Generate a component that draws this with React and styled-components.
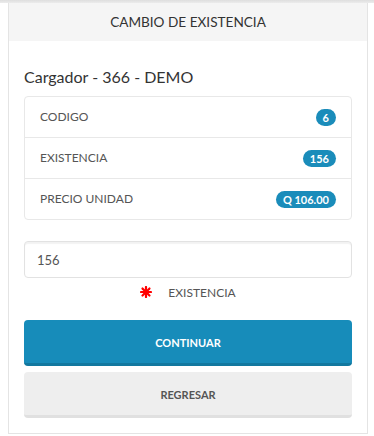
import React, { useState } from 'react'
import styled, { createGlobalStyle } from 'styled-components'

const GlobalStyle = createGlobalStyle`
  html, body {
    margin: 0;
    padding: 0;
    background: #ffffff;
    font-family: "Lato", "Liberation Sans", sans-serif;
    color: #555;
  }
  * { box-sizing: border-box; }
`

const TopShadow = styled.div`
  height: 3px;
  background: linear-gradient(#dedede, #ececec);
`

const Panel = styled.div`
  margin: 0 6px 0 8px;
  border: 1px solid #e4e4e4;
  border-top: none;
  background: #fff;
`

const PanelHeader = styled.div`
  background: #f5f5f5;
  height: 38px;
  display: flex;
  align-items: center;
  justify-content: center;
  font-size: 13.6px;
  color: #333;
`

const PanelBody = styled.div`
  padding: 24px 15px 15px;
`

const Title = styled.h3`
  margin: 0 0 7px;
  font-size: 16px;
  font-weight: 400;
  line-height: 24px;
  color: #333;
`

const ListGroup = styled.ul`
  list-style: none;
  margin: 0;
  padding: 0;
  border: 1px solid #e8e8e8;
  border-radius: 4px;
`

const ListItem = styled.li`
  display: flex;
  justify-content: space-between;
  align-items: center;
  padding: 10px 15px;
  line-height: 20px;
  font-size: 12px;
  color: #555;
  & + & {
    border-top: 1px solid #e8e8e8;
  }
`

const Badge = styled.span`
  background: #1a8cba;
  color: #fff;
  font-size: 11px;
  font-weight: 700;
  line-height: 17px;
  padding: 0 7px;
  border-radius: 10px;
`

const Input = styled.input`
  display: block;
  width: 100%;
  height: 37px;
  margin-top: 21px;
  padding: 0 12px;
  border: 1px solid #e2e2e2;
  border-radius: 4px;
  box-shadow: inset 0 2px 1px rgba(0, 0, 0, 0.05);
  font-family: inherit;
  font-size: 13px;
  color: #555;
  outline: none;
`

const FieldLabel = styled.div`
  display: flex;
  justify-content: center;
  align-items: center;
  gap: 16px;
  height: 28px;
  font-size: 12px;
  color: #555;
`

const Button = styled.button`
  display: block;
  width: 100%;
  height: 46px;
  margin-top: ${p => p.$mt}px;
  border: none;
  border-bottom: 3px solid ${p => p.$shade};
  border-radius: 4px;
  background: ${p => p.$bg};
  color: ${p => p.$fg};
  font-family: inherit;
  font-size: 11px;
  font-weight: 700;
  padding-top: 3px;
  cursor: pointer;
`

const Asterisk = () => (
  <svg width="12" height="12" viewBox="0 0 12 12">
    <g stroke="#ff0000" strokeWidth="2.2" strokeLinecap="round">
      <line x1="6" y1="1" x2="6" y2="11" />
      <line x1="1" y1="6" x2="11" y2="6" />
      <line x1="2.5" y1="2.5" x2="9.5" y2="9.5" />
      <line x1="9.5" y1="2.5" x2="2.5" y2="9.5" />
    </g>
    <circle cx="6" cy="6" r="2.6" fill="#ff0000" />
  </svg>
)

const rows = [
  { label: 'CODIGO', value: '6' },
  { label: 'EXISTENCIA', value: '156' },
  { label: 'PRECIO UNIDAD', value: 'Q 106.00' },
]

export default function App() {
  const [stock, setStock] = useState('156')
  return (
    <>
      <GlobalStyle />
      <TopShadow />
      <Panel>
        <PanelHeader>CAMBIO DE EXISTENCIA</PanelHeader>
        <PanelBody>
          <Title>Cargador - 366 - DEMO</Title>
          <ListGroup>
            {rows.map(r => (
              <ListItem key={r.label}>
                {r.label}
                <Badge>{r.value}</Badge>
              </ListItem>
            ))}
          </ListGroup>
          <Input value={stock} onChange={e => setStock(e.target.value)} />
          <FieldLabel>
            <Asterisk />
            EXISTENCIA
          </FieldLabel>
          <Button $mt={14} $bg="#178cba" $shade="#12789f" $fg="#fff">CONTINUAR</Button>
          <Button $mt={6} $bg="#eeeeee" $shade="#e0e0e0" $fg="#555">REGRESAR</Button>
        </PanelBody>
      </Panel>
    </>
  )
}
